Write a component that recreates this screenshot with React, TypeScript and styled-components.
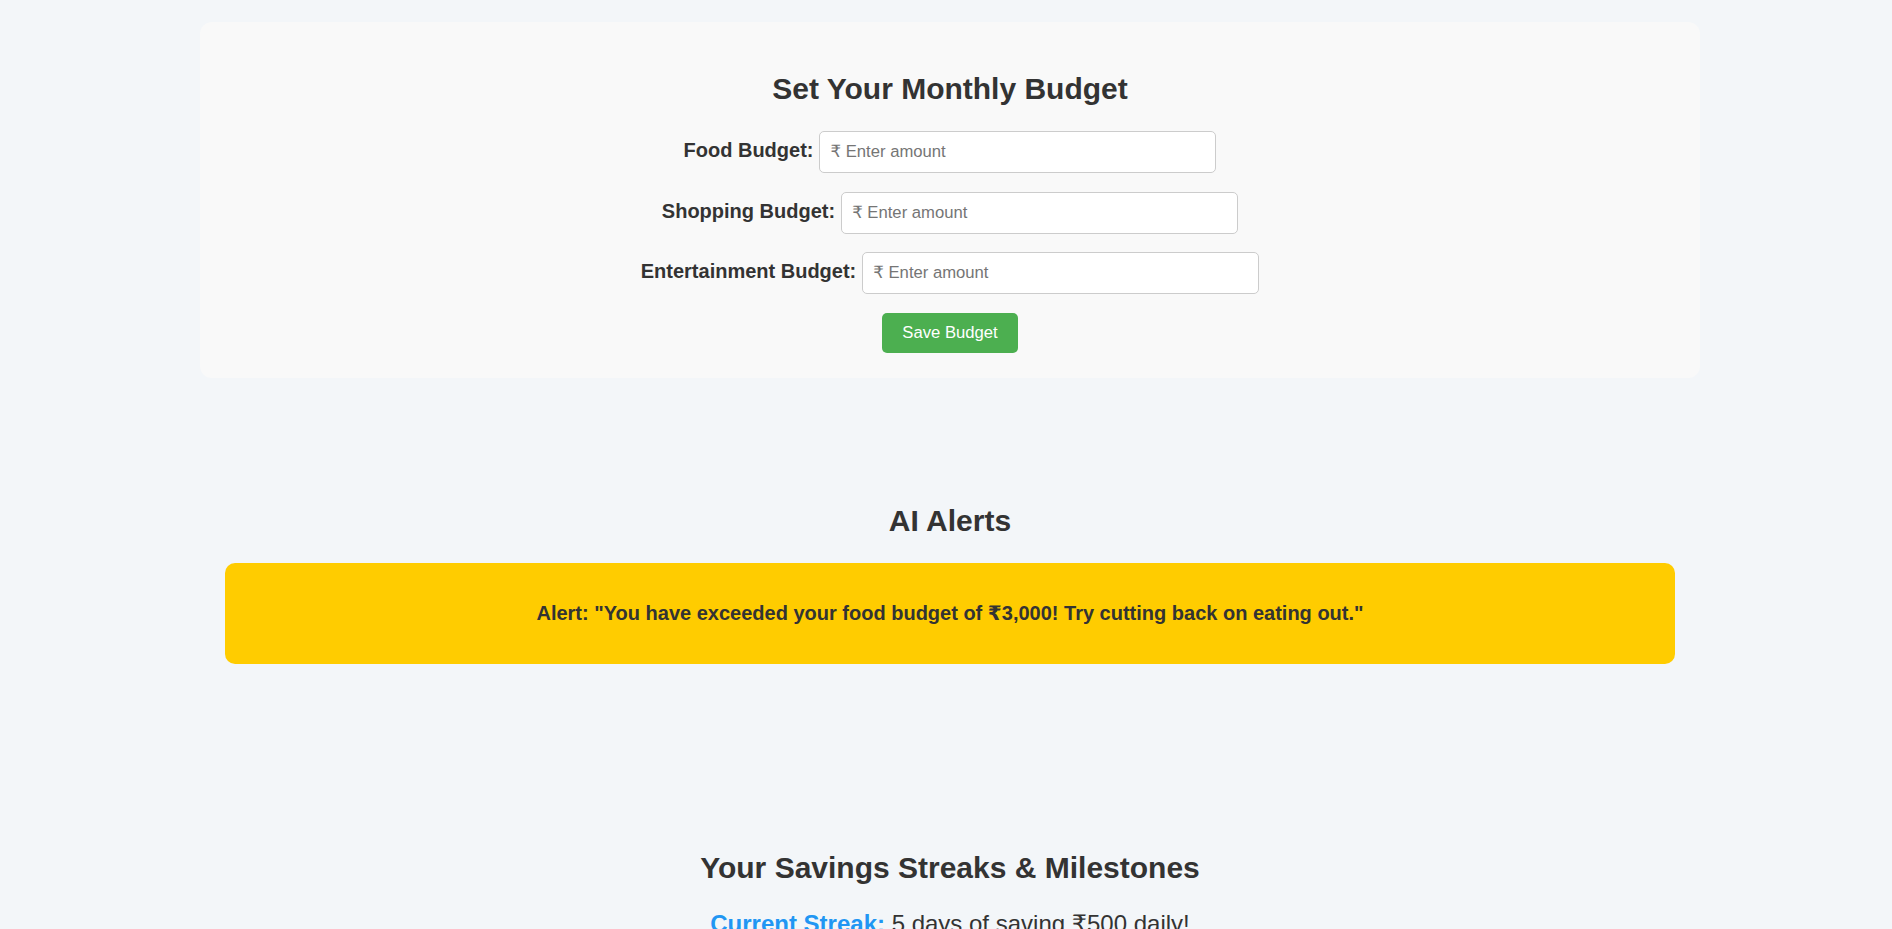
import React, { useState } from "react";
import styled, { createGlobalStyle } from "styled-components";

const GlobalStyle = createGlobalStyle`
  html, body {
    margin: 0;
    padding: 0;
    overflow: hidden;
  }
  body {
    background: #f3f6f9;
    color: #333;
    font-family: "Liberation Sans", Arial, "DejaVu Sans", sans-serif;
  }
`;

const Page = styled.div`
  padding: 22px 0 0 8px;
`;

const Section = styled.section<{ $filled?: boolean; $top?: number }>`
  width: 1500px;
  box-sizing: border-box;
  margin: ${({ $top }) => $top ?? 0}px auto 0;
  padding: 25px;
  border-radius: 12px;
  background: ${({ $filled }) => ($filled ? "#f9f9f9" : "transparent")};
  text-align: center;
`;

const Heading = styled.h2`
  margin: 25px 0;
  font-size: 30px;
  font-weight: bold;
  line-height: normal;
  color: #333;
`;

const Form = styled.form`
  display: flex;
  flex-direction: column;
  align-items: center;
  gap: 18.5px;
  margin-top: 1px;
`;

const Row = styled.div`
  display: flex;
  align-items: baseline;
  gap: 6px;
`;

const Label = styled.label`
  font-size: 20px;
  font-weight: bold;
  color: #333;
`;

const AmountInput = styled.input`
  width: 397px;
  box-sizing: border-box;
  padding: 10px;
  border: 1px solid #ccc;
  border-radius: 5px;
  background: #fff;
  font-family: "Liberation Sans", Arial, "DejaVu Sans", sans-serif;
  font-size: 16.67px;
  line-height: normal;
  color: #333;
  outline: none;
  &::placeholder {
    color: #757575;
  }
`;

const SaveButton = styled.button`
  padding: 10px 20px;
  border: none;
  border-radius: 5px;
  background: #4caf50;
  color: #fff;
  font-family: "Liberation Sans", Arial, "DejaVu Sans", sans-serif;
  font-size: 16.67px;
  line-height: normal;
  cursor: pointer;
`;

const AlertBox = styled.div`
  padding: 18.75px;
  border-radius: 10px;
  background: #ffcc00;
  color: #333;
`;

const AlertText = styled.p`
  margin: 20px 0;
  font-size: 20px;
  font-weight: bold;
  line-height: normal;
`;

const StreakLine = styled.p`
  margin: 24px 0;
  font-size: 24px;
  line-height: normal;
  color: #333;
`;

const Accent = styled.span`
  color: #2196f3;
  font-weight: bold;
`;

const budgets = ["Food", "Shopping", "Entertainment"];

const App = () => {
  const [values, setValues] = useState<Record<string, string>>({});

  return (
    <Page>
      <GlobalStyle />
      <Section $filled>
        <Heading>Set Your Monthly Budget</Heading>
        <Form onSubmit={(e) => e.preventDefault()}>
          {budgets.map((name) => (
            <Row key={name}>
              <Label htmlFor={name}>{name} Budget:</Label>
              <AmountInput
                id={name}
                type="text"
                placeholder="₹ Enter amount"
                value={values[name] ?? ""}
                onChange={(e) =>
                  setValues({ ...values, [name]: e.target.value })
                }
              />
            </Row>
          ))}
          <SaveButton type="submit">Save Budget</SaveButton>
        </Form>
      </Section>

      <Section $top={76}>
        <Heading>AI Alerts</Heading>
        <AlertBox>
          <AlertText>
            Alert: "You have exceeded your food budget of ₹3,000! Try cutting
            back on eating out."
          </AlertText>
        </AlertBox>
      </Section>

      <Section $top={112}>
        <Heading>Your Savings Streaks &amp; Milestones</Heading>
        <StreakLine>
          <Accent>Current Streak:</Accent> 5 days of saving ₹500 daily!
        </StreakLine>
        <StreakLine>
          <Accent>Next Milestone:</Accent> Save ₹10,000 this month
        </StreakLine>
      </Section>
    </Page>
  );
};

export default App;
